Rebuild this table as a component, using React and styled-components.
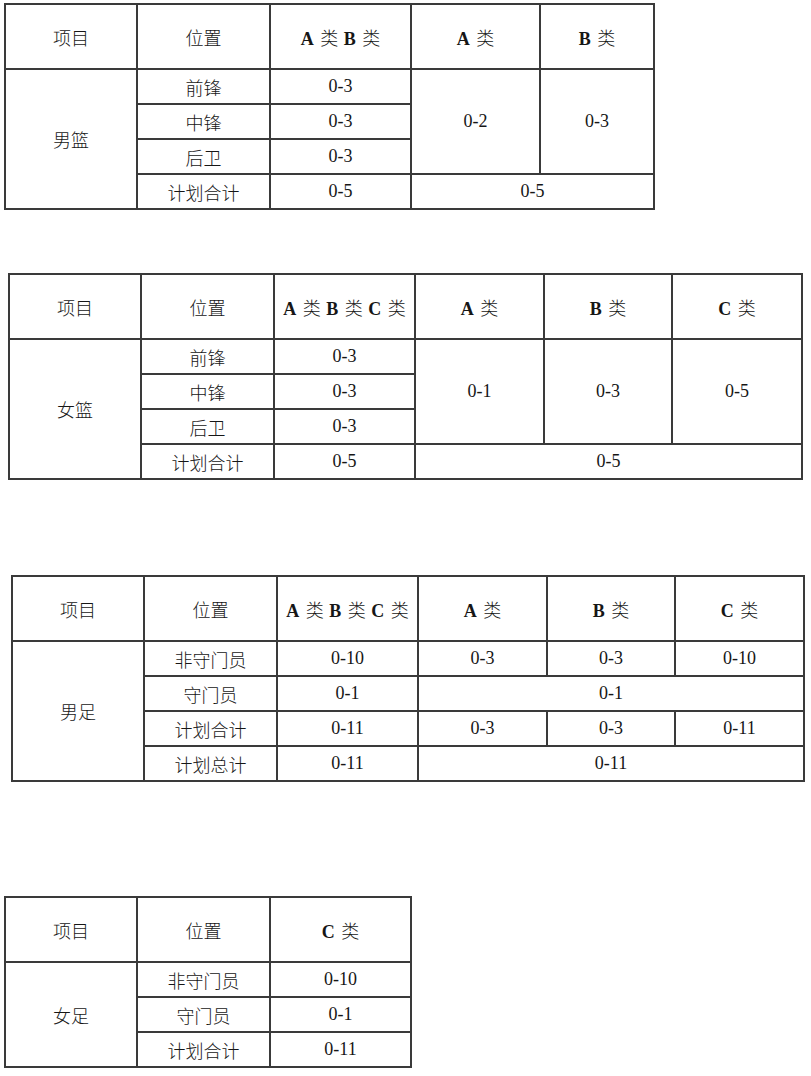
import styled, { createGlobalStyle } from "styled-components";

const GlobalStyle = createGlobalStyle`
  html, body {
    margin: 0;
    padding: 0;
    background: #fff;
  }
  body {
    font-family: "Liberation Serif", "Times New Roman", "Noto Sans CJK SC", serif;
    color: #161616;
  }
`;

const Page = styled.div`
  display: flex;
  flex-direction: column;
  align-items: flex-start;
  width: 811px;
  height: 1076px;
  overflow: hidden;
`;

const Table = styled.table`
  border-collapse: collapse;
  table-layout: fixed;
  width: ${({ $width }) => $width}px;
  margin-top: ${({ $top }) => $top}px;
  margin-left: ${({ $left }) => $left}px;
  font-family: "Liberation Serif", "Times New Roman", "Noto Sans CJK SC", serif;
  font-size: 18px;
  color: #161616;
`;

const HeadRow = styled.tr`
  height: 65px;
`;

const Row = styled.tr`
  height: 35px;
`;

const Cell = styled.td`
  border: 2px solid #3a3a3a;
  padding: 0;
  text-align: center;
  vertical-align: middle;
  font-weight: 300;
  white-space: nowrap;
`;

const HeadCell = styled(Cell).attrs({ as: "th" })`
  word-spacing: 1px;
`;

const Letter = styled.b`
  font-weight: bold;
  margin-right: 1px;
`;

const Cols = ({ widths }) => (
  <colgroup>
    {widths.map((w, i) => (
      <col key={i} style={{ width: w }} />
    ))}
  </colgroup>
);

const Kind = ({ letters }) =>
  letters.map((l, i) => (
    <span key={l}>
      <Letter>{l}</Letter> 类{i < letters.length - 1 ? " " : ""}
    </span>
  ));

const Head = ({ merged, singles }) => (
  <HeadRow>
    <HeadCell>项目</HeadCell>
    <HeadCell>位置</HeadCell>
    {merged && (
      <HeadCell>
        <Kind letters={merged} />
      </HeadCell>
    )}
    {singles.map((l) => (
      <HeadCell key={l}>
        <Kind letters={[l]} />
      </HeadCell>
    ))}
  </HeadRow>
);

const MenBasketball = () => (
  <Table $width={649} $top={3} $left={4}>
    <Cols widths={[132, 133, 141, 129, 114]} />
    <thead>
      <Head merged={["A", "B"]} singles={["A", "B"]} />
    </thead>
    <tbody>
      <Row>
        <Cell rowSpan={4}>男篮</Cell>
        <Cell>前锋</Cell>
        <Cell>0-3</Cell>
        <Cell rowSpan={3}>0-2</Cell>
        <Cell rowSpan={3}>0-3</Cell>
      </Row>
      <Row>
        <Cell>中锋</Cell>
        <Cell>0-3</Cell>
      </Row>
      <Row>
        <Cell>后卫</Cell>
        <Cell>0-3</Cell>
      </Row>
      <Row>
        <Cell>计划合计</Cell>
        <Cell>0-5</Cell>
        <Cell colSpan={2}>0-5</Cell>
      </Row>
    </tbody>
  </Table>
);

const WomenBasketball = () => (
  <Table $width={793} $top={63} $left={8}>
    <Cols widths={[132, 133, 141, 129, 128, 130]} />
    <thead>
      <Head merged={["A", "B", "C"]} singles={["A", "B", "C"]} />
    </thead>
    <tbody>
      <Row>
        <Cell rowSpan={4}>女篮</Cell>
        <Cell>前锋</Cell>
        <Cell>0-3</Cell>
        <Cell rowSpan={3}>0-1</Cell>
        <Cell rowSpan={3}>0-3</Cell>
        <Cell rowSpan={3}>0-5</Cell>
      </Row>
      <Row>
        <Cell>中锋</Cell>
        <Cell>0-3</Cell>
      </Row>
      <Row>
        <Cell>后卫</Cell>
        <Cell>0-3</Cell>
      </Row>
      <Row>
        <Cell>计划合计</Cell>
        <Cell>0-5</Cell>
        <Cell colSpan={3}>0-5</Cell>
      </Row>
    </tbody>
  </Table>
);

const MenFootball = () => (
  <Table $width={792} $top={95} $left={11}>
    <Cols widths={[132, 133, 141, 129, 128, 129]} />
    <thead>
      <Head merged={["A", "B", "C"]} singles={["A", "B", "C"]} />
    </thead>
    <tbody>
      <Row>
        <Cell rowSpan={4}>男足</Cell>
        <Cell>非守门员</Cell>
        <Cell>0-10</Cell>
        <Cell>0-3</Cell>
        <Cell>0-3</Cell>
        <Cell>0-10</Cell>
      </Row>
      <Row>
        <Cell>守门员</Cell>
        <Cell>0-1</Cell>
        <Cell colSpan={3}>0-1</Cell>
      </Row>
      <Row>
        <Cell>计划合计</Cell>
        <Cell>0-11</Cell>
        <Cell>0-3</Cell>
        <Cell>0-3</Cell>
        <Cell>0-11</Cell>
      </Row>
      <Row>
        <Cell>计划总计</Cell>
        <Cell>0-11</Cell>
        <Cell colSpan={3}>0-11</Cell>
      </Row>
    </tbody>
  </Table>
);

const WomenFootball = () => (
  <Table $width={406} $top={114} $left={4}>
    <Cols widths={[132, 133, 141]} />
    <thead>
      <Head singles={["C"]} />
    </thead>
    <tbody>
      <Row>
        <Cell rowSpan={3}>女足</Cell>
        <Cell>非守门员</Cell>
        <Cell>0-10</Cell>
      </Row>
      <Row>
        <Cell>守门员</Cell>
        <Cell>0-1</Cell>
      </Row>
      <Row>
        <Cell>计划合计</Cell>
        <Cell>0-11</Cell>
      </Row>
    </tbody>
  </Table>
);

export default function App() {
  return (
    <>
      <GlobalStyle />
      <Page>
        <MenBasketball />
        <WomenBasketball />
        <MenFootball />
        <WomenFootball />
      </Page>
    </>
  );
}
